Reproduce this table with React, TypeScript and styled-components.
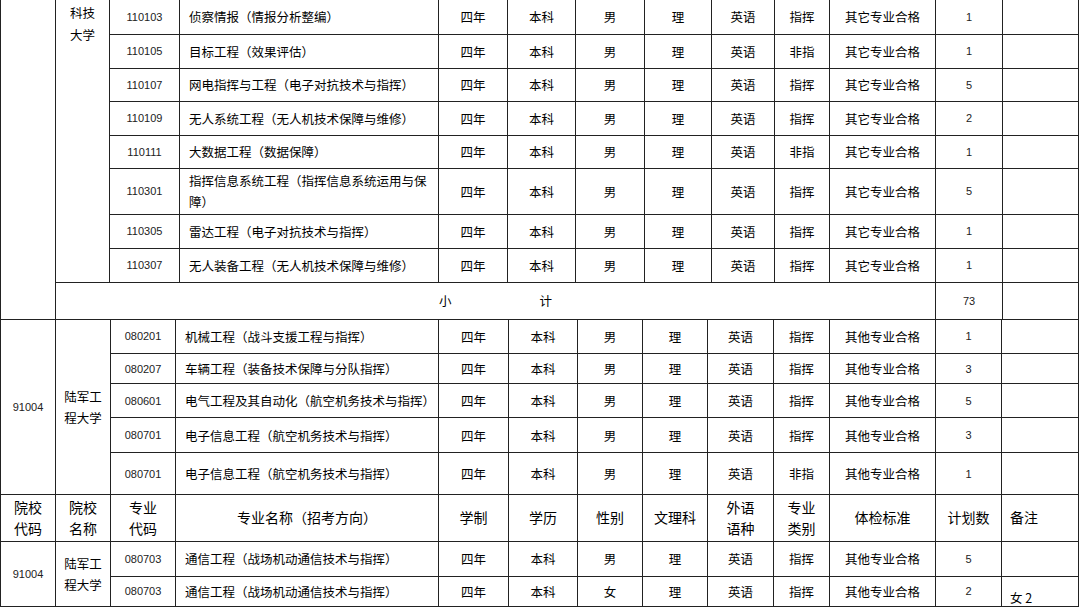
import React from 'react';
import styled, { createGlobalStyle } from 'styled-components';

type Row = [string, string, string, string];

const TOP_WIDTHS = [55, 54, 70, 259, 69, 68, 69, 67, 63, 55, 106, 67, 76];
const LOWER_WIDTHS = [55, 55, 65, 263, 70, 69, 65, 65, 66, 56, 106, 66, 77];

const topRows: Row[] = [
  ['110103', '侦察情报（情报分析整编）', '指挥', '1'],
  ['110105', '目标工程（效果评估）', '非指', '1'],
  ['110107', '网电指挥与工程（电子对抗技术与指挥）', '指挥', '5'],
  ['110109', '无人系统工程（无人机技术保障与维修）', '指挥', '2'],
  ['110111', '大数据工程（数据保障）', '非指', '1'],
  ['110301', '指挥信息系统工程（指挥信息系统运用与保\n障）', '指挥', '5'],
  ['110305', '雷达工程（电子对抗技术与指挥）', '指挥', '1'],
  ['110307', '无人装备工程（无人机技术保障与维修）', '指挥', '1'],
];
const topHeights = [34, 34, 33, 34, 33, 46, 34, 34];

const armyRows: Row[] = [
  ['080201', '机械工程（战斗支援工程与指挥）', '指挥', '1'],
  ['080207', '车辆工程（装备技术保障与分队指挥）', '指挥', '3'],
  ['080601', '电气工程及其自动化（航空机务技术与指挥）', '指挥', '5'],
  ['080701', '电子信息工程（航空机务技术与指挥）', '指挥', '3'],
  ['080701', '电子信息工程（航空机务技术与指挥）', '非指', '1'],
];
const armyHeights = [34, 30, 34, 35, 42];

const headers = [
  '院校\n代码',
  '院校\n名称',
  '专业\n代码',
  '专业名称（招考方向）',
  '学制',
  '学历',
  '性别',
  '文理科',
  '外语\n语种',
  '专业\n类别',
  '体检标准',
  '计划数',
];

const GlobalStyle = createGlobalStyle`
  html, body {
    margin: 0;
    padding: 0;
    background: #ffffff;
  }
  body {
    font-family: "Noto Sans CJK SC", "Noto Sans", sans-serif;
    color: #000;
  }
`;

const Sheet = styled.div`
  width: 1078px;
  display: flex;
  flex-direction: column;
`;

const Grid = styled.table`
  width: 1078px;
  table-layout: fixed;
  border-collapse: collapse;
  border-left: 1px solid #222;
  border-right: 1px solid #222;
`;

const Line = styled.tr<{ $h: number }>`
  height: ${(p) => p.$h}px;
`;

// first row of each block: the line above belongs to the block before
const FirstLine = styled(Line)`
  & > td {
    border-top: none;
  }
`;

const Cell = styled.td<{ $align?: 'left' | 'center'; $valign?: 'top' | 'middle' | 'bottom'; $num?: boolean }>`
  border: 1px solid #222;
  padding: ${(p) => (p.$align === 'left' ? '0 6px 0 9px' : '0')};
  text-align: ${(p) => p.$align || 'center'};
  vertical-align: ${(p) => p.$valign || 'middle'};
  font-family: ${(p) =>
    p.$num ? '"Liberation Sans", Arial, sans-serif' : '"Noto Sans CJK SC", sans-serif'};
  font-size: ${(p) => (p.$num ? '11px' : '12.5px')};
  line-height: ${(p) => (p.$num ? '14px' : '21px')};
  white-space: pre-line;
  color: ${(p) => (p.$num ? '#222' : '#000')};
`;

const OpenTop = styled(Cell)`
  border-top: none;
  padding-top: 2px;
  line-height: 22px;
`;

const HeadCell = styled.td<{ $align?: 'left' | 'center' }>`
  border: 1px solid #222;
  border-top: none;
  padding: ${(p) => (p.$align === 'left' ? '0 0 0 8px' : '0')};
  text-align: ${(p) => p.$align || 'center'};
  vertical-align: middle;
  font-size: 14px;
  line-height: 21px;
  white-space: pre-line;
  color: #000;
`;

const NoteCell = styled(Cell)`
  padding: 0 0 1px 8px;
  line-height: 14px;
`;

const Subtotal = styled.div`
  display: flex;
  justify-content: center;
  gap: 88px;
  font-size: 12.5px;
`;

function Cols({ widths }: { widths: number[] }) {
  return (
    <colgroup>
      {widths.map((w, i) => (
        <col key={i} style={{ width: w }} />
      ))}
    </colgroup>
  );
}

function MajorCells({ row, standard }: { row: Row; standard: string }) {
  const [code, name, kind, plan] = row;
  return (
    <>
      <Cell $num>{code}</Cell>
      <Cell $align="left">{name}</Cell>
      <Cell>四年</Cell>
      <Cell>本科</Cell>
      <Cell>男</Cell>
      <Cell>理</Cell>
      <Cell>英语</Cell>
      <Cell>{kind}</Cell>
      <Cell>{standard}</Cell>
      <Cell $num>{plan}</Cell>
      <Cell />
    </>
  );
}

export default function App() {
  return (
    <>
      <GlobalStyle />
      <Sheet>
        <Grid>
          <Cols widths={TOP_WIDTHS} />
          <tbody>
            {topRows.map((row, i) => {
              const R = i === 0 ? FirstLine : Line;
              return (
                <R key={row[0]} $h={topHeights[i]}>
                  {i === 0 && (
                    <>
                      <OpenTop rowSpan={9} />
                      <OpenTop rowSpan={8} $valign="top">
                        {'科技\n大学'}
                      </OpenTop>
                    </>
                  )}
                  <MajorCells row={row} standard="其它专业合格" />
                </R>
              );
            })}
            <Line $h={37}>
              <Cell colSpan={10}>
                <Subtotal>
                  <span>小</span>
                  <span>计</span>
                </Subtotal>
              </Cell>
              <Cell $num>73</Cell>
              <Cell />
            </Line>
          </tbody>
        </Grid>

        <Grid>
          <Cols widths={LOWER_WIDTHS} />
          <tbody>
            {armyRows.map((row, i) => {
              const R = i === 0 ? FirstLine : Line;
              return (
                <R key={i} $h={armyHeights[i]}>
                  {i === 0 && (
                    <>
                      <Cell rowSpan={5} $num>
                        91004
                      </Cell>
                      <Cell rowSpan={5}>{'陆军工\n程大学'}</Cell>
                    </>
                  )}
                  <MajorCells row={row} standard="其他专业合格" />
                </R>
              );
            })}
          </tbody>
        </Grid>

        <Grid>
          <Cols widths={LOWER_WIDTHS} />
          <tbody>
            <Line $h={46}>
              {headers.map((h) => (
                <HeadCell key={h}>{h}</HeadCell>
              ))}
              <HeadCell $align="left">备注</HeadCell>
            </Line>
            <Line $h={35}>
              <Cell rowSpan={2} $num>
                91004
              </Cell>
              <Cell rowSpan={2}>{'陆军工\n程大学'}</Cell>
              <Cell $num>080703</Cell>
              <Cell $align="left">通信工程（战场机动通信技术与指挥）</Cell>
              <Cell>四年</Cell>
              <Cell>本科</Cell>
              <Cell>男</Cell>
              <Cell>理</Cell>
              <Cell>英语</Cell>
              <Cell>指挥</Cell>
              <Cell>其他专业合格</Cell>
              <Cell $num>5</Cell>
              <Cell />
            </Line>
            <Line $h={30}>
              <Cell $num>080703</Cell>
              <Cell $align="left">通信工程（战场机动通信技术与指挥）</Cell>
              <Cell>四年</Cell>
              <Cell>本科</Cell>
              <Cell>女</Cell>
              <Cell>理</Cell>
              <Cell>英语</Cell>
              <Cell>指挥</Cell>
              <Cell>其他专业合格</Cell>
              <Cell $num>2</Cell>
              <NoteCell $align="left" $valign="bottom">
                女 2
              </NoteCell>
            </Line>
          </tbody>
        </Grid>
      </Sheet>
    </>
  );
}
